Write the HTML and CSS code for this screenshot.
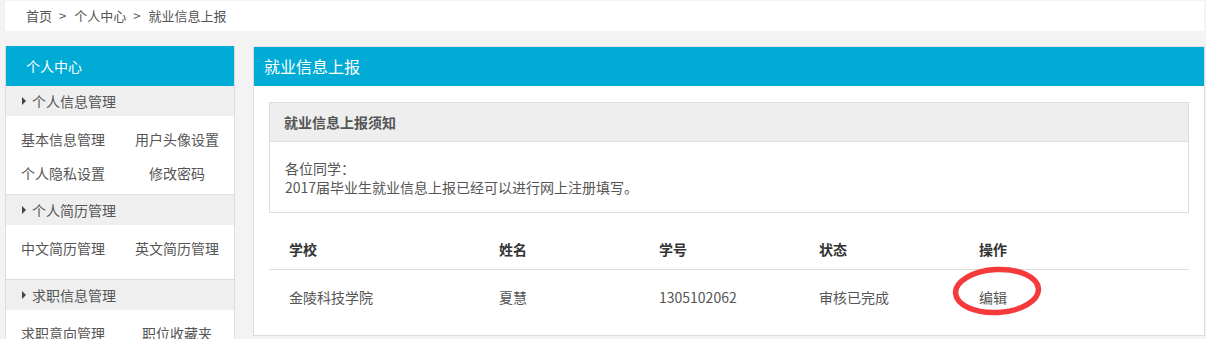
FILE: index.html
```html
<!DOCTYPE html>
<html lang="zh-CN">
<head>
    <meta charset="UTF-8">
    <title>就业信息上报</title>
<link rel="stylesheet" href="styles.css">
</head>
<body>
<div class="crumb">首页<span class="sep">&gt;</span>个人中心<span class="sep">&gt;</span>就业信息上报</div>
<div class="main">
    <div class="side">
        <div class="side-title">个人中心</div>
        <div class="group">
            <div class="group-title"><span class="tri"></span>个人信息管理</div>
            <div class="links">
                <a>基本信息管理</a>
                <a>用户头像设置</a>
                <a>个人隐私设置</a>
                <a>修改密码</a>
            </div>
        </div>
        <div class="group">
            <div class="group-title"><span class="tri"></span>个人简历管理</div>
            <div class="links tall">
                <a>中文简历管理</a>
                <a>英文简历管理</a>
            </div>
        </div>
        <div class="group">
            <div class="group-title"><span class="tri"></span>求职信息管理</div>
            <div class="links">
                <a>求职意向管理</a>
                <a>职位收藏夹</a>
            </div>
        </div>
    </div>
    <div class="panel">
        <div class="panel-title">就业信息上报</div>
        <div class="panel-body">
            <div class="notice">
                <div class="notice-title">就业信息上报须知</div>
                <div class="notice-text">
                    各位同学：<br>
                    2017届毕业生就业信息上报已经可以进行网上注册填写。
                </div>
            </div>
            <table class="list">
                <tr>
                    <th class="c1">学校</th>
                    <th class="c2">姓名</th>
                    <th class="c3">学号</th>
                    <th class="c4">状态</th>
                    <th>操作</th>
                </tr>
                <tr>
                    <td>金陵科技学院</td>
                    <td>夏慧</td>
                    <td>1305102062</td>
                    <td>审核已完成</td>
                    <td><span class="edit">编辑<svg class="mark" width="92" height="52" viewBox="0 0 92 52"><ellipse cx="45" cy="25" rx="41.5" ry="21.5" fill="none" stroke="#f53a3c" stroke-width="5.5" transform="rotate(-3 45 25)"/></svg></span></td>
                </tr>
            </table>
        </div>
    </div>
</div>
</body>
</html>
```

FILE: styles.css
```css
body{
    margin: 0;
    padding: 1px 1px 0 5px;
    background-color: #f3f3f3;
    font-family: "Noto Sans CJK SC", "Liberation Sans", sans-serif;
    font-size: 14px;
    color: #555;
}
.crumb{
    background-color: #fff;
    height: 30px;
    line-height: 30px;
    padding-left: 21px;
    font-size: 13px;
    color: #555;
    margin-right: 1px;
}
.sep{
    margin: 0 8px 0 7px;
}
.main{
    display: flex;
    align-items: flex-start;
    gap: 18px;
    margin-top: 15px;
}
.side{
    width: 228px;
    flex-shrink: 0;
    background-color: #fff;
    border-left: 1px solid #ddd;
    border-right: 1px solid #ddd;
}
.side-title{
    background-color: #00abd6;
    color: #fff;
    height: 40px;
    line-height: 40px;
    padding-left: 20px;
    font-size: 14px;
}
.group + .group{
    border-top: 1px solid #ddd;
}
.group-title{
    background-color: #efefef;
    height: 30px;
    line-height: 30px;
    padding-left: 16px;
    display: flex;
    align-items: center;
}
.tri{
    width: 0;
    height: 0;
    border-top: 4px solid transparent;
    border-bottom: 4px solid transparent;
    border-left: 4px solid #444;
    margin-right: 6px;
}
.links{
    display: grid;
    grid-template-columns: 1fr 1fr;
    grid-auto-rows: 34px;
    padding: 6px 0 4px;
}
.links.tall{
    padding-bottom: 14px;
}
.links a{
    line-height: 34px;
    text-align: center;
    color: #555;
}
.panel{
    flex: 1;
    background-color: #fff;
    border: 1px solid #ddd;
    border-top-color: #e3e3e3;
}
.panel-title{
    background-color: #00abd6;
    color: #fff;
    height: 39px;
    line-height: 39px;
    padding-left: 10px;
    font-size: 16px;
}
.panel-body{
    padding: 16px 15px 11px;
}
.notice{
    border: 1px solid #ddd;
}
.notice-title{
    background-color: #eee;
    height: 38px;
    line-height: 38px;
    border-bottom: 1px solid #ddd;
    padding-left: 14px;
    font-weight: bold;
    color: #555;
}
.notice-text{
    padding: 17px 15px 15px;
    line-height: 19px;
}
.list{
    width: 100%;
    border-collapse: collapse;
    margin-top: 16px;
}
.list th{
    text-align: left;
    height: 40px;
    padding: 0 0 0 20px;
    color: #333;
    font-weight: bold;
    border-bottom: 1px solid #ddd;
}
.list td{
    height: 54px;
    padding: 0 0 0 20px;
}
.c1{ width: 190px; }
.c2, .c3, .c4{ width: 140px; }
.edit{
    position: relative;
    display: inline-block;
    line-height: 20px;
}
.mark{
    position: absolute;
    left: -27px;
    top: -21px;
}
```
